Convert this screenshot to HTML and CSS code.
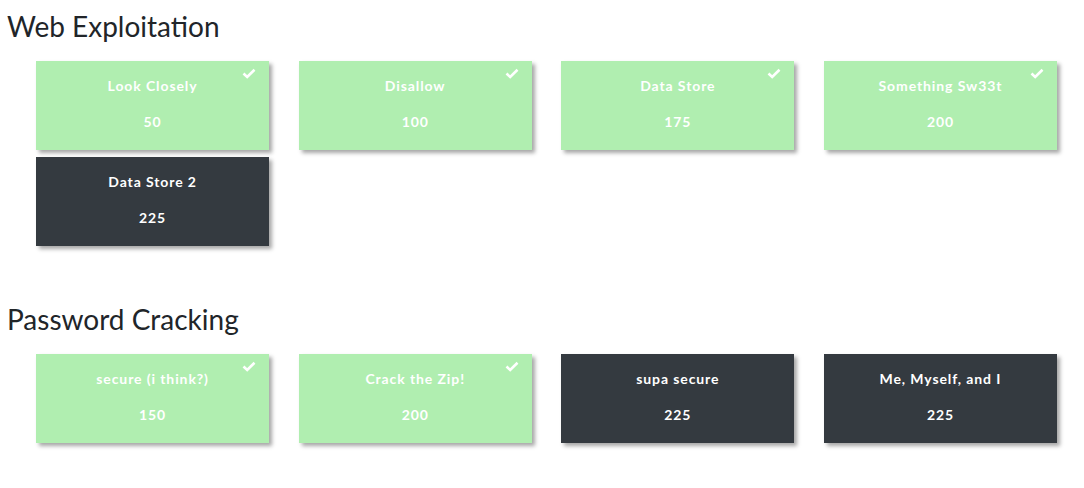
FILE: index.html
```html
<!DOCTYPE html>
<html lang="en">
<head>
    <meta charset="UTF-8">
    <meta name="viewport" content="width=device-width, initial-scale=1.0">
    <title>Challenges</title>
    <link rel="stylesheet" href="styles.css">
</head>
<body>
    <div class="main">
        <div class="category">
            <h2>Web Exploitation</h2>
            <div class="grid">
                <div class="card solved">
                    <svg class="check" viewBox="0 0 14 11"><path d="M1.5 5.5 L5.2 9 L12.5 1.8"/></svg>
                    <div class="name">Look Closely</div>
                    <div class="points">50</div>
                </div>
                <div class="card solved">
                    <svg class="check" viewBox="0 0 14 11"><path d="M1.5 5.5 L5.2 9 L12.5 1.8"/></svg>
                    <div class="name">Disallow</div>
                    <div class="points">100</div>
                </div>
                <div class="card solved">
                    <svg class="check" viewBox="0 0 14 11"><path d="M1.5 5.5 L5.2 9 L12.5 1.8"/></svg>
                    <div class="name">Data Store</div>
                    <div class="points">175</div>
                </div>
                <div class="card solved">
                    <svg class="check" viewBox="0 0 14 11"><path d="M1.5 5.5 L5.2 9 L12.5 1.8"/></svg>
                    <div class="name">Something Sw33t</div>
                    <div class="points">200</div>
                </div>
                <div class="card">
                    <div class="name">Data Store 2</div>
                    <div class="points">225</div>
                </div>
            </div>
        </div>

        <div class="category">
            <h2>Password Cracking</h2>
            <div class="grid">
                <div class="card solved">
                    <svg class="check" viewBox="0 0 14 11"><path d="M1.5 5.5 L5.2 9 L12.5 1.8"/></svg>
                    <div class="name">secure (i think?)</div>
                    <div class="points">150</div>
                </div>
                <div class="card solved">
                    <svg class="check" viewBox="0 0 14 11"><path d="M1.5 5.5 L5.2 9 L12.5 1.8"/></svg>
                    <div class="name">Crack the Zip!</div>
                    <div class="points">200</div>
                </div>
                <div class="card">
                    <div class="name">supa secure</div>
                    <div class="points">225</div>
                </div>
                <div class="card">
                    <div class="name">Me, Myself, and I</div>
                    <div class="points">225</div>
                </div>
            </div>
        </div>
    </div>
</body>
</html>
```

FILE: styles.css
```css
* {
    margin: 0;
    padding: 0;
    box-sizing: border-box;
}
body {
    font-family: Lato, "Open Sans", sans-serif;
    background: #fff;
    color: #212529;
}
.main {
    padding: 9px 0 0 7px;
}
.category {
    margin-bottom: 56px;
}
h2 {
    font-size: 28px;
    font-weight: 400;
    line-height: 34px;
    margin-bottom: 18px;
}
.grid {
    width: 1021px;
    margin-left: 29px;
    display: grid;
    grid-template-columns: repeat(4, 1fr);
    column-gap: 29.5px;
    row-gap: 7px;
}
.card {
    position: relative;
    height: 89px;
    background-color: #343a40;
    color: #fff;
    box-shadow: 3px 3px 4px rgba(0, 0, 0, 0.35);
    display: flex;
    flex-direction: column;
    align-items: center;
    padding-top: 16px;
    gap: 18px;
    font-size: 14px;
    font-weight: 700;
    letter-spacing: 0.9px;
    line-height: 18px;
}
.card.solved {
    background-color: #b0eeb0;
}
.check {
    position: absolute;
    top: 7px;
    right: 13px;
    width: 14px;
    height: 11px;
    fill: none;
    stroke: #fff;
    stroke-width: 2.6;
}
```
